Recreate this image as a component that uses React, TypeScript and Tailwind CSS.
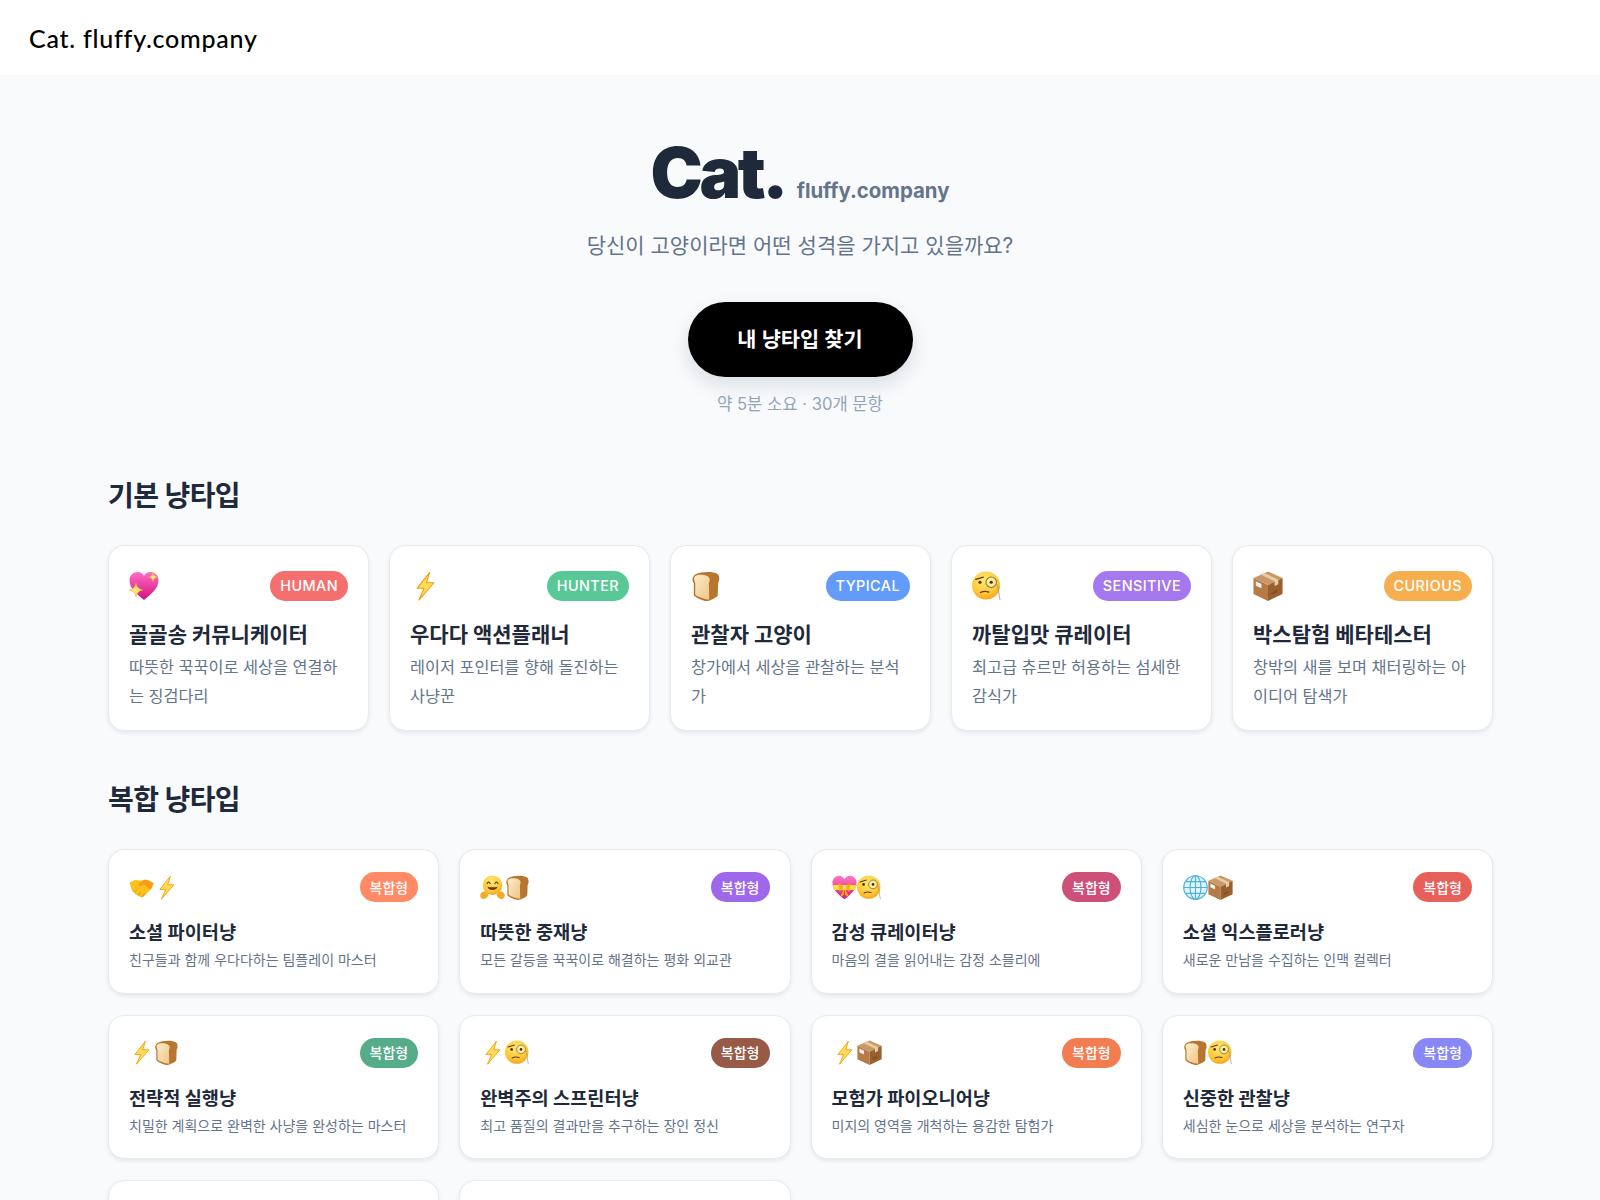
import React from "react";

const Bolt = ({ w, h }: { w: number; h: number }) => (
  <svg width={w} height={h} viewBox="0 0 32 32">
    <path d="M21 1.5 L7.5 18.5 H15 L9.5 31 L25.5 12.5 H17.5 Z" fill="#ffdd55" stroke="#f59a0b" strokeWidth="1.1" strokeLinejoin="round" />
  </svg>
);
const Sparkle = ({ x, y, r }: { x: number; y: number; r: number }) => (
  <path d={`M${x} ${y - r} Q${x + r * 0.15} ${y - r * 0.15} ${x + r} ${y} Q${x + r * 0.15} ${y + r * 0.15} ${x} ${y + r} Q${x - r * 0.15} ${y + r * 0.15} ${x - r} ${y} Q${x - r * 0.15} ${y - r * 0.15} ${x} ${y - r}Z`} fill="#ffe27a" stroke="#f5a623" strokeWidth="0.5" />
);
const HeartPath = "M16 30 C10 25 1.5 19 1.5 10.5 C1.5 5.5 5.2 2 9.5 2 C12.3 2 14.8 3.6 16 6 C17.2 3.6 19.7 2 22.5 2 C26.8 2 30.5 5.5 30.5 10.5 C30.5 19 22 25 16 30Z";
const SparkHeart = ({ w, h }: { w: number; h: number }) => (
  <svg width={w} height={h} viewBox="1 1 30 30">
    <defs>
      <linearGradient id="hg" x1="0" y1="0" x2="0" y2="1">
        <stop offset="0" stopColor="#ff6ec7" />
        <stop offset="1" stopColor="#d4107f" />
      </linearGradient>
    </defs>
    <path d={HeartPath} fill="url(#hg)" />
    <Sparkle x={8} y={20} r={7} />
    <Sparkle x={25} y={7} r={4.5} />
  </svg>
);
const RibbonHeart = ({ w, h }: { w: number; h: number }) => (
  <svg width={w} height={h} viewBox="1 1 30 30">
    <defs>
      <linearGradient id="rg" x1="0" y1="0" x2="0" y2="1">
        <stop offset="0" stopColor="#ff78c4" />
        <stop offset="1" stopColor="#d81b7c" />
      </linearGradient>
    </defs>
    <path d={HeartPath} fill="url(#rg)" />
    <path d="M1.8 13 H30.2 L29 19 H3 Z" fill="#ffd84d" />
    <path d="M16 16 L9 11 L10 21 Z M16 16 L23 11 L22 21 Z M16 16 L11 27 L15 25 Z M16 16 L21 27 L17 25 Z" fill="#f7b500" />
    <circle cx="16" cy="16" r="2" fill="#ffe27a" />
  </svg>
);
const Bread = ({ w, h }: { w: number; h: number }) => (
  <svg width={w} height={h} viewBox="0 0 32 32">
    <defs>
      <linearGradient id="bg" x1="0" y1="0" x2="1" y2="1">
        <stop offset="0" stopColor="#fbeecb" />
        <stop offset="1" stopColor="#eec583" />
      </linearGradient>
    </defs>
    <path d="M5 3.5 C10 0.5 24 0 28 3 C31 5.5 30.5 10.5 29 12.5 L28.5 26 C27.5 28 20 32 17 32 C13 32 4 28 3 25.5 L3 13 C0.5 10 1.5 5.5 5 3.5Z" fill="#b8752f" />
    <path d="M3.5 9 C2.5 6 5.5 4 10 4 C16 4 20 6 20 9 C20 11 19.5 12 19 13 L19.5 30.5 C14 30 5.5 27 4.5 25 L4.5 13 C4 11.5 3.5 10.5 3.5 9Z" fill="url(#bg)" />
  </svg>
);
const Monocle = ({ w, h }: { w: number; h: number }) => (
  <svg width={w} height={h} viewBox="0 0 32 32">
    <defs>
      <radialGradient id="mg" cx="0.45" cy="0.3" r="0.8">
        <stop offset="0" stopColor="#ffe773" />
        <stop offset="0.6" stopColor="#ffc938" />
        <stop offset="1" stopColor="#f59310" />
      </radialGradient>
    </defs>
    <circle cx="15" cy="15.5" r="15" fill="url(#mg)" />
    <path d="M4 9 L12 6.5" stroke="#5b3a10" strokeWidth="1.4" strokeLinecap="round" fill="none" />
    <circle cx="8.5" cy="12" r="1.7" fill="#4a2f0c" />
    <circle cx="20.5" cy="12" r="5.6" fill="#fff3b8" fillOpacity="0.75" stroke="#8a7434" strokeWidth="1.1" />
    <circle cx="20.5" cy="12" r="1.7" fill="#4a2f0c" />
    <path d="M9 23 C12 21.5 15 21.5 18 22.5" stroke="#5b3a10" strokeWidth="1.3" strokeLinecap="round" fill="none" />
    <path d="M26 13 C29 18 28 24 30 31" stroke="#8f8f8f" strokeWidth="0.8" fill="none" />
  </svg>
);
const Box = ({ w, h }: { w: number; h: number }) => (
  <svg width={w} height={h} viewBox="0 0 32 32">
    <path d="M16 0.5 L31.5 7.5 L16 15 L0.5 7.5Z" fill="#c99a66" />
    <path d="M0.5 7.5 L16 15 V32 L0.5 24.5Z" fill="#b57a45" />
    <path d="M31.5 7.5 L16 15 V32 L31.5 24.5Z" fill="#99602f" />
    <path d="M8 3.8 L23 11 V16 L27 14.2 V9.2 L12 2Z" fill="#e5cda8" />
    <path d="M3 11 L9 13.8 V18.5 L3 15.7Z" fill="#f2efe9" />
    <path d="M20 22.5 L26 19.6 V23 L20 25.9Z" fill="#7b4a22" fillOpacity="0.6" />
  </svg>
);
const Handshake = ({ w, h }: { w: number; h: number }) => (
  <svg width={w} height={h} viewBox="0 0 32 32">
    <path d="M0.5 10 L8 6 L15 7.5 L20 6 L24 6.5 L31.5 10.5 L28.5 18 L18 28 C15 29 13 28 12 26 C9 26 7 24 7 22 C5 22 3.5 20.5 3.5 19 Z" fill="#fcc21b" />
    <path d="M20 6 L13 10.5 C11.5 12 12 14 15 14 L19 12 L27.5 19 L31.5 10.5 L24 6.5Z" fill="#f79c19" />
    <path d="M7 22 L10 19 M12 26 L15 22 M17 27.5 L20 24" stroke="#d98a0c" strokeWidth="1.2" strokeLinecap="round" />
  </svg>
);
const Hug = ({ w, h }: { w: number; h: number }) => (
  <svg width={w} height={h} viewBox="0 0 32 32">
    <defs>
      <radialGradient id="ug" cx="0.45" cy="0.3" r="0.8">
        <stop offset="0" stopColor="#ffe773" />
        <stop offset="0.6" stopColor="#ffc938" />
        <stop offset="1" stopColor="#f59310" />
      </radialGradient>
    </defs>
    <circle cx="16" cy="13" r="12.5" fill="url(#ug)" />
    <path d="M9 11 C10 8.5 12 8.5 13 11 M19 11 C20 8.5 22 8.5 23 11" stroke="#5b3a10" strokeWidth="1.4" strokeLinecap="round" fill="none" />
    <path d="M9.5 15 C11 20.5 21 20.5 22.5 15 C19 16 13 16 9.5 15Z" fill="#6b3a12" />
    <path d="M0.5 25 C1.5 21 6 20 8 22 L11 25 C10 29 6 31.5 3 30.5 C0.5 29.5 0 27 0.5 25Z M31.5 25 C30.5 21 26 20 24 22 L21 25 C22 29 26 31.5 29 30.5 C31.5 29.5 32 27 31.5 25Z" fill="#f9a825" />
  </svg>
);
const Globe = ({ w, h }: { w: number; h: number }) => (
  <svg width={w} height={h} viewBox="0 0 32 32" fill="none" stroke="#4db2de" strokeWidth="1.5">
    <circle cx="16" cy="16" r="15" fill="#e3f5fc" />
    <ellipse cx="16" cy="16" rx="7" ry="15" />
    <path d="M16 1 V31 M1 16 H31 M3.5 8.5 H28.5 M3.5 23.5 H28.5" />
  </svg>
);

const emojiMap: Record<string, React.FC<{ w: number; h: number }>> = {
  heart: SparkHeart,
  bolt: Bolt,
  bread: Bread,
  monocle: Monocle,
  box: Box,
  shake: Handshake,
  hug: Hug,
  ribbon: RibbonHeart,
  globe: Globe,
};

const basics = [
  { e: "heart", tag: "HUMAN", c: "bg-[#f56f6f]", t: "골골송 커뮤니케이터", d: "따뜻한 꾹꾹이로 세상을 연결하는 징검다리" },
  { e: "bolt", tag: "HUNTER", c: "bg-[#59c897]", t: "우다다 액션플래너", d: "레이저 포인터를 향해 돌진하는 사냥꾼" },
  { e: "bread", tag: "TYPICAL", c: "bg-[#629bfa]", t: "관찰자 고양이", d: "창가에서 세상을 관찰하는 분석가" },
  { e: "monocle", tag: "SENSITIVE", c: "bg-[#a678f0]", t: "까탈입맛 큐레이터", d: "최고급 츄르만 허용하는 섬세한 감식가" },
  { e: "box", tag: "CURIOUS", c: "bg-[#f6ae4e]", t: "박스탐험 베타테스터", d: "창밖의 새를 보며 채터링하는 아이디어 탐색가" },
];

const combos = [
  { e: ["shake", "bolt"], c: "bg-[#ff8a65]", t: "소셜 파이터냥", d: "친구들과 함께 우다다하는 팀플레이 마스터" },
  { e: ["hug", "bread"], c: "bg-[#9f67ea]", t: "따뜻한 중재냥", d: "모든 갈등을 꾹꾹이로 해결하는 평화 외교관" },
  { e: ["ribbon", "monocle"], c: "bg-[#ce5079]", t: "감성 큐레이터냥", d: "마음의 결을 읽어내는 감정 소믈리에" },
  { e: ["globe", "box"], c: "bg-[#e8605a]", t: "소셜 익스플로러냥", d: "새로운 만남을 수집하는 인맥 컬렉터" },
  { e: ["bolt", "bread"], c: "bg-[#56ac88]", t: "전략적 실행냥", d: "치밀한 계획으로 완벽한 사냥을 완성하는 마스터" },
  { e: ["bolt", "monocle"], c: "bg-[#975a47]", t: "완벽주의 스프린터냥", d: "최고 품질의 결과만을 추구하는 장인 정신" },
  { e: ["bolt", "box"], c: "bg-[#f27d50]", t: "모험가 파이오니어냥", d: "미지의 영역을 개척하는 용감한 탐험가" },
  { e: ["bread", "monocle"], c: "bg-[#8787f5]", t: "신중한 관찰냥", d: "세심한 눈으로 세상을 분석하는 연구자" },
];

const cardCls = "bg-white rounded-2xl border border-[#e8eaee] shadow-[0_2px_4px_rgba(15,23,42,0.08)]";

export default function App() {
  return (
    <div className="h-[1200px] overflow-hidden bg-[#f8fafc] font-['Inter','Noto_Sans_CJK_KR',sans-serif]">
      <header className="h-[75px] bg-white flex items-center px-[29px] pt-[2px]">
        <span className="font-['Lato',sans-serif] font-medium text-[25px] tracking-[0.03em] text-black">Cat. fluffy.company</span>
      </header>
      <section className="flex flex-col items-center pt-[56px]">
        <div className="flex items-baseline gap-[12px] h-[84px]">
          <span className="text-[70px] leading-[84px] font-black tracking-[-0.05em] text-[#1e2a3a]">Cat.</span>
          <span className="text-[20.4px] font-bold text-[#64748b]">fluffy.company</span>
        </div>
        <p className="mt-[15px] text-[21px] leading-[32px] text-[#64748b]">당신이 고양이라면 어떤 성격을 가지고 있을까요?</p>
        <button className="mt-[40px] w-[225px] h-[75px] rounded-full bg-black text-white text-[20.8px] font-semibold shadow-[0_8px_20px_rgba(15,23,42,0.12)]">내 냥타입 찾기</button>
        <p className="mt-[15px] text-[16.6px] leading-[24px] text-[#94a3b8]">약 5분 소요 · 30개 문항</p>
      </section>
      <main className="pl-[108px] pr-[107px] pt-[60px]">
        <h2 className="text-[28px] leading-[40px] font-bold tracking-[-0.02em] text-[#1e293b]">기본 냥타입</h2>
        <div className="mt-[29px] grid grid-cols-5 gap-[20px]">
          {basics.map((b) => {
            const E = emojiMap[b.e];
            return (
              <div key={b.tag} className={`${cardCls} h-[186px] px-[20px] pt-[25px]`}>
                <div className="flex items-center justify-between h-[30px]">
                  <E w={30} h={30} />
                  <span className={`${b.c} rounded-full h-[30px] px-[10px] flex items-center text-white text-[14.4px] font-medium tracking-[0.03em]`}>{b.tag}</span>
                </div>
                <h3 className="mt-[19px] text-[21px] leading-[30px] font-bold text-[#1e293b]">{b.t}</h3>
                <p className="mt-[3px] text-[16.3px] leading-[28.5px] text-[#64748b]">{b.d}</p>
              </div>
            );
          })}
        </div>
        <h2 className="mt-[49px] text-[28px] leading-[40px] font-bold tracking-[-0.02em] text-[#1e293b]">복합 냥타입</h2>
        <div className="mt-[29px] grid grid-cols-4 gap-x-[20px] gap-y-[21px]">
          {combos.map((b) => (
            <div key={b.t} className={`${cardCls} h-[144.5px] px-[20px] pt-[22px]`}>
              <div className="flex items-center justify-between h-[30px]">
                <div className="flex">
                  {b.e.map((n) => {
                    const E = emojiMap[n];
                    return <E key={n} w={25} h={25} />;
                  })}
                </div>
                <span className={`${b.c} rounded-full h-[30px] px-[10px] flex items-center text-white text-[14px] font-medium`}>복합형</span>
              </div>
              <h3 className="mt-[16px] text-[18.6px] leading-[28px] font-bold text-[#1e293b]">{b.t}</h3>
              <p className="mt-[2px] text-[14px] leading-[24px] text-[#64748b]">{b.d}</p>
            </div>
          ))}
          <div className={`${cardCls} h-[144.5px]`} />
          <div className={`${cardCls} h-[144.5px]`} />
        </div>
      </main>
    </div>
  );
}
